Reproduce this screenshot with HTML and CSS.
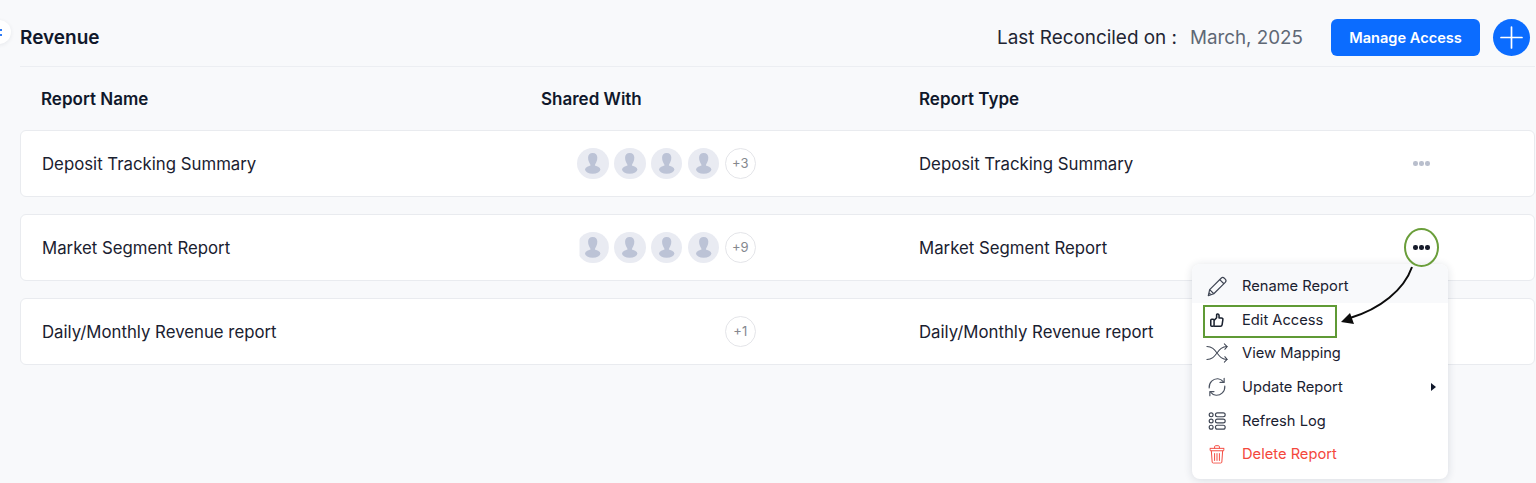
FILE: index.html
```html
<!DOCTYPE html>
<html lang="en">
<head>
<meta charset="utf-8">
<title>Revenue</title>
<link rel="stylesheet" href="styles.css">
</head>
<body>
<div class="page">
  <button class="side-toggle" aria-label="Toggle sidebar"><span class="side-dots"></span></button>
  <header class="topbar">
    <h1 class="title">Revenue</h1>
    <div class="top-right">
      <span class="rec-label">Last Reconciled on :</span>
      <span class="rec-date">March, 2025</span>
      <button class="manage">Manage Access</button>
      <button class="plus" aria-label="Add">
        <svg width="37" height="37" viewBox="0 0 37 37"><path d="M18.500 8v21M8 18.500h21" stroke="#fff" stroke-width="1.700" stroke-linecap="round"/></svg>
      </button>
    </div>
  </header>
  <div class="thead">
    <div>Report Name</div>
    <div>Shared With</div>
    <div>Report Type</div>
  </div>
  <div class="rows">
    <div class="row">
      <div>Deposit Tracking Summary</div>
      <div class="shared">
        <span class="av"><svg viewBox="0 0 32 32"><use href="#person"/></svg></span>
        <span class="av"><svg viewBox="0 0 32 32"><use href="#person"/></svg></span>
        <span class="av"><svg viewBox="0 0 32 32"><use href="#person"/></svg></span>
        <span class="av"><svg viewBox="0 0 32 32"><use href="#person"/></svg></span>
        <span class="more">+3</span>
      </div>
      <div>Deposit Tracking Summary</div>
      <div class="dots dots-muted"><i></i><i></i><i></i></div>
    </div>
    <div class="row">
      <div>Market Segment Report</div>
      <div class="shared">
        <span class="av av-clip"><svg viewBox="0 0 32 32"><use href="#person"/></svg></span>
        <span class="av"><svg viewBox="0 0 32 32"><use href="#person"/></svg></span>
        <span class="av"><svg viewBox="0 0 32 32"><use href="#person"/></svg></span>
        <span class="av"><svg viewBox="0 0 32 32"><use href="#person"/></svg></span>
        <span class="more">+9</span>
      </div>
      <div>Market Segment Report</div>
      <div class="dots"><i></i><i></i><i></i></div>
    </div>
    <div class="row">
      <div>Daily/Monthly Revenue report</div>
      <div class="shared"><span class="more">+1</span></div>
      <div>Daily/Monthly Revenue report</div>
      <div></div>
    </div>
  </div>

  <ul class="menu">
    <li class="item item-hover">
      <svg class="ic" viewBox="0 0 24 24" fill="none" stroke="#3f4654" stroke-width="1.300" stroke-linejoin="round"><path d="M2.500 22.500l1.500-6.500L16.500 3.500c1-1 2.500-1 3.500 0l1 1c1 1 1 2.500 0 3.500L8.500 20.500z"/><path d="M4 16l4.500 4.500M15 5l4.500 4.500M3.300 19.500l1.600 1.500"/></svg>
      Rename Report
    </li>
    <li class="item">
      <svg class="ic ic-thumb" viewBox="0 0 24 24" fill="none" stroke="#1b2230" stroke-width="2.100" stroke-linejoin="round"><rect x="3.500" y="11" width="4.500" height="9.500" rx="1.300"/><path d="M8 12.500l3.500-3.500V5c0-1.700 3.300-1.700 3.300 1v3.300h3.200c1.600 0 2.300 1 2 2.200l-1 6.800c-.2 1.300-1 2.200-2.200 2.200H8"/></svg>
      Edit Access
    </li>
    <li class="item">
      <svg class="ic" viewBox="0 0 24 24" fill="none" stroke="#3f4654" stroke-width="1.100" stroke-linecap="round" stroke-linejoin="round"><path d="M1 5c5.500 0 8 3 11 7s5.500 7 11 7M1 19c5.500 0 8-3 11-7s5.500-7 11-7"/><path d="M20 2l3 3-2.500 3M20.500 16l2.500 3-3 3"/></svg>
      View Mapping
    </li>
    <li class="item">
      <svg class="ic" viewBox="0 0 24 24" fill="none" stroke="#4b5361" stroke-width="1.300" stroke-linecap="round" stroke-linejoin="round"><path d="M3.500 13C3 7 8 2.700 13 3c2.700.2 4.300 1.300 5.800 3.200"/><path d="M19.800 2.500v4.500h-4.500"/><path d="M20.500 11c.5 6-4.500 10.300-9.500 10-2.700-.2-4.300-1.300-5.800-3.200"/><path d="M4.200 21.500V17h4.500"/></svg>
      Update Report
      <span class="caret"></span>
    </li>
    <li class="item">
      <svg class="ic ic-log" viewBox="0 0 24 24" fill="none" stroke="#3f4654" stroke-width="1.500"><circle cx="4.500" cy="4" r="2.500"/><circle cx="4.500" cy="12" r="2.500"/><circle cx="4.500" cy="20" r="2.500"/><rect x="10" y="1.500" width="12.500" height="5" rx="2.500"/><rect x="10" y="9.500" width="12.500" height="5" rx="2.500"/><rect x="10" y="17.500" width="12.500" height="5" rx="2.500"/></svg>
      Refresh Log
    </li>
    <li class="item item-danger">
      <svg class="ic ic-trash" viewBox="0 0 24 24" fill="none" stroke="#f4473c" stroke-width="1.200" stroke-linejoin="round"><path d="M3 5h18M9 5V3c0-.8.5-1.300 1.300-1.300h3.400c.8 0 1.300.5 1.300 1.300v2"/><path d="M4 5c-.5 0-.8 1.800-.2 3h16.400c.6-1.200.3-3-.2-3"/><path d="M5 8l1 14c.1.800.6 1.300 1.400 1.300h9.200c.8 0 1.300-.5 1.400-1.300l1-14M9 11v9.500M12 11v9.500M15 11v9.500"/></svg>
      Delete Report
    </li>
  </ul>

  <span class="mark-ring"></span>
  <span class="mark-box"></span>
  <svg class="mark-arrow" width="90" height="70" viewBox="0 0 90 70">
    <path d="M72 2C64 25 40 44 10 53" fill="none" stroke="#0c0c0c" stroke-width="2"/>
    <path d="M1 57L10 48l4 11z" fill="#0c0c0c"/>
  </svg>
</div>

<svg class="defs" width="0" height="0" aria-hidden="true">
  <symbol id="person" viewBox="0 0 32 32">
    <path d="M16 5c-3 0-4.700 1.800-4.700 4.700 0 2.800.8 4.800 2 6.500.6.900.6 2-.2 2.600h5.800c-.8-.6-.8-1.700-.2-2.600 1.200-1.700 2-3.700 2-6.500C20.700 6.800 19 5 16 5z" fill="#bcc3d6"/>
    <ellipse cx="16" cy="22" rx="7.800" ry="4.200" fill="#bcc3d6"/>
  </symbol>
</svg>
</body>
</html>
```

FILE: styles.css
```css
* { box-sizing: border-box; }
html, body { margin: 0; height: 100%; }
body {
  background: #f8f9fb;
  color: #10182b;
  font-family: Inter, "Liberation Sans", sans-serif;
  overflow: hidden;
}
.page {
  position: relative;
  width: 1536px;
  height: 483px;
  padding: 0 1px 0 20px;
  overflow: hidden;
}
.side-toggle {
  position: absolute;
  left: -13px;
  top: 20px;
  width: 24px;
  height: 24px;
  padding: 0;
  border: 0;
  border-radius: 50%;
  background: #fff;
  box-shadow: 0 1px 4px rgba(30, 40, 70, .08);
}
.side-dots {
  position: absolute;
  left: 13px;
  top: 9px;
  width: 1.500px;
  height: 7px;
  background: linear-gradient(#2f7bf6 0 2px, transparent 2px 5px, #2f7bf6 5px 7px);
}
.topbar {
  height: 67px;
  display: flex;
  align-items: center;
  justify-content: space-between;
  border-bottom: 1px solid #eceef2;
  padding-top: 9px;
}
.title {
  margin: 0;
  font-size: 19px;
  font-weight: 600;
}
.top-right {
  display: flex;
  align-items: center;
  padding-right: 5px;
}
.rec-label {
  font-size: 18.900px;
  color: #1f2533;
  margin-right: 13px;
}
.rec-date {
  font-size: 18.800px;
  color: #5f6875;
  margin-right: 28px;
}
.manage {
  width: 149px;
  height: 37px;
  border: 0;
  border-radius: 6px;
  background: #0b6cff;
  color: #fff;
  font: 600 14.600px Inter, "Liberation Sans", sans-serif;
  margin-right: 13px;
}
.plus {
  width: 37px;
  height: 37px;
  padding: 0;
  border: 0;
  border-radius: 50%;
  background: #0b6cff;
}
.plus svg { display: block; }
.thead {
  height: 63px;
  padding-left: 21px;
  display: grid;
  grid-template-columns: 500px 378px 1fr;
  align-items: center;
  font-size: 17px;
  font-weight: 600;
}
.rows {
  display: flex;
  flex-direction: column;
  gap: 17px;
}
.row {
  height: 67px;
  padding-left: 21px;
  display: grid;
  grid-template-columns: 499px 378px 1fr 121px;
  align-items: center;
  background: #fff;
  border: 1px solid #e9ebef;
  border-radius: 6px;
  font-size: 16.800px;
  color: #1a2130;
}
.shared {
  width: 215px;
  display: flex;
  justify-content: flex-end;
  gap: 5.400px;
}
.av {
  width: 31.400px;
  height: 31.400px;
  border-radius: 50%;
  background: #e9ebf2;
  overflow: hidden;
}
.av svg { display: block; width: 31.400px; height: 31.400px; }
.av-clip { clip-path: inset(0 0 0 2px); }
.more {
  width: 31.400px;
  height: 31.400px;
  display: flex;
  align-items: center;
  justify-content: center;
  border: 1px solid #e4e5e9;
  border-radius: 50%;
  background: #fff;
  font-size: 13px;
  color: #85888f;
}
.dots {
  display: flex;
  gap: 1.500px;
}
.dots i {
  width: 4.500px;
  height: 4.500px;
  border-radius: 50%;
  background: #171c2b;
}
.dots-muted i { background: #b9bfcd; }
.menu {
  position: absolute;
  left: 1192px;
  top: 264px;
  width: 256px;
  height: 215px;
  margin: 0;
  padding: 0;
  list-style: none;
  background: #fff;
  border-radius: 8px;
  box-shadow: 0 1px 8px rgba(30, 40, 70, .14);
  overflow: hidden;
}
.item {
  position: relative;
  height: 33.600px;
  display: flex;
  align-items: center;
  gap: 14px;
  padding-left: 14px;
  font-size: 14.700px;
  color: #1a2130;
}
.item-hover {
  height: 39px;
  padding-top: 5px;
  background: #f8f9fb;
}
.item-danger { color: #f4473c; }
.ic { width: 22px; height: 22px; flex: none; }
.ic-thumb { transform: scale(.8); }
.ic-log { transform: scale(.85); }
.ic-trash { transform: scale(.88); }
.caret {
  position: absolute;
  right: 12px;
  top: 13px;
  width: 0;
  height: 0;
  border-left: 5px solid #10182b;
  border-top: 4.500px solid transparent;
  border-bottom: 4.500px solid transparent;
}
.mark-ring {
  position: absolute;
  left: 1404px;
  top: 228px;
  width: 35px;
  height: 39px;
  border: 2px solid #6a9e3a;
  border-radius: 50%;
}
.mark-box {
  position: absolute;
  left: 1203px;
  top: 305px;
  width: 134px;
  height: 33px;
  border: 2.500px solid #5f9a35;
}
.mark-arrow {
  position: absolute;
  left: 1340px;
  top: 265px;
}
.defs { position: absolute; }
```
